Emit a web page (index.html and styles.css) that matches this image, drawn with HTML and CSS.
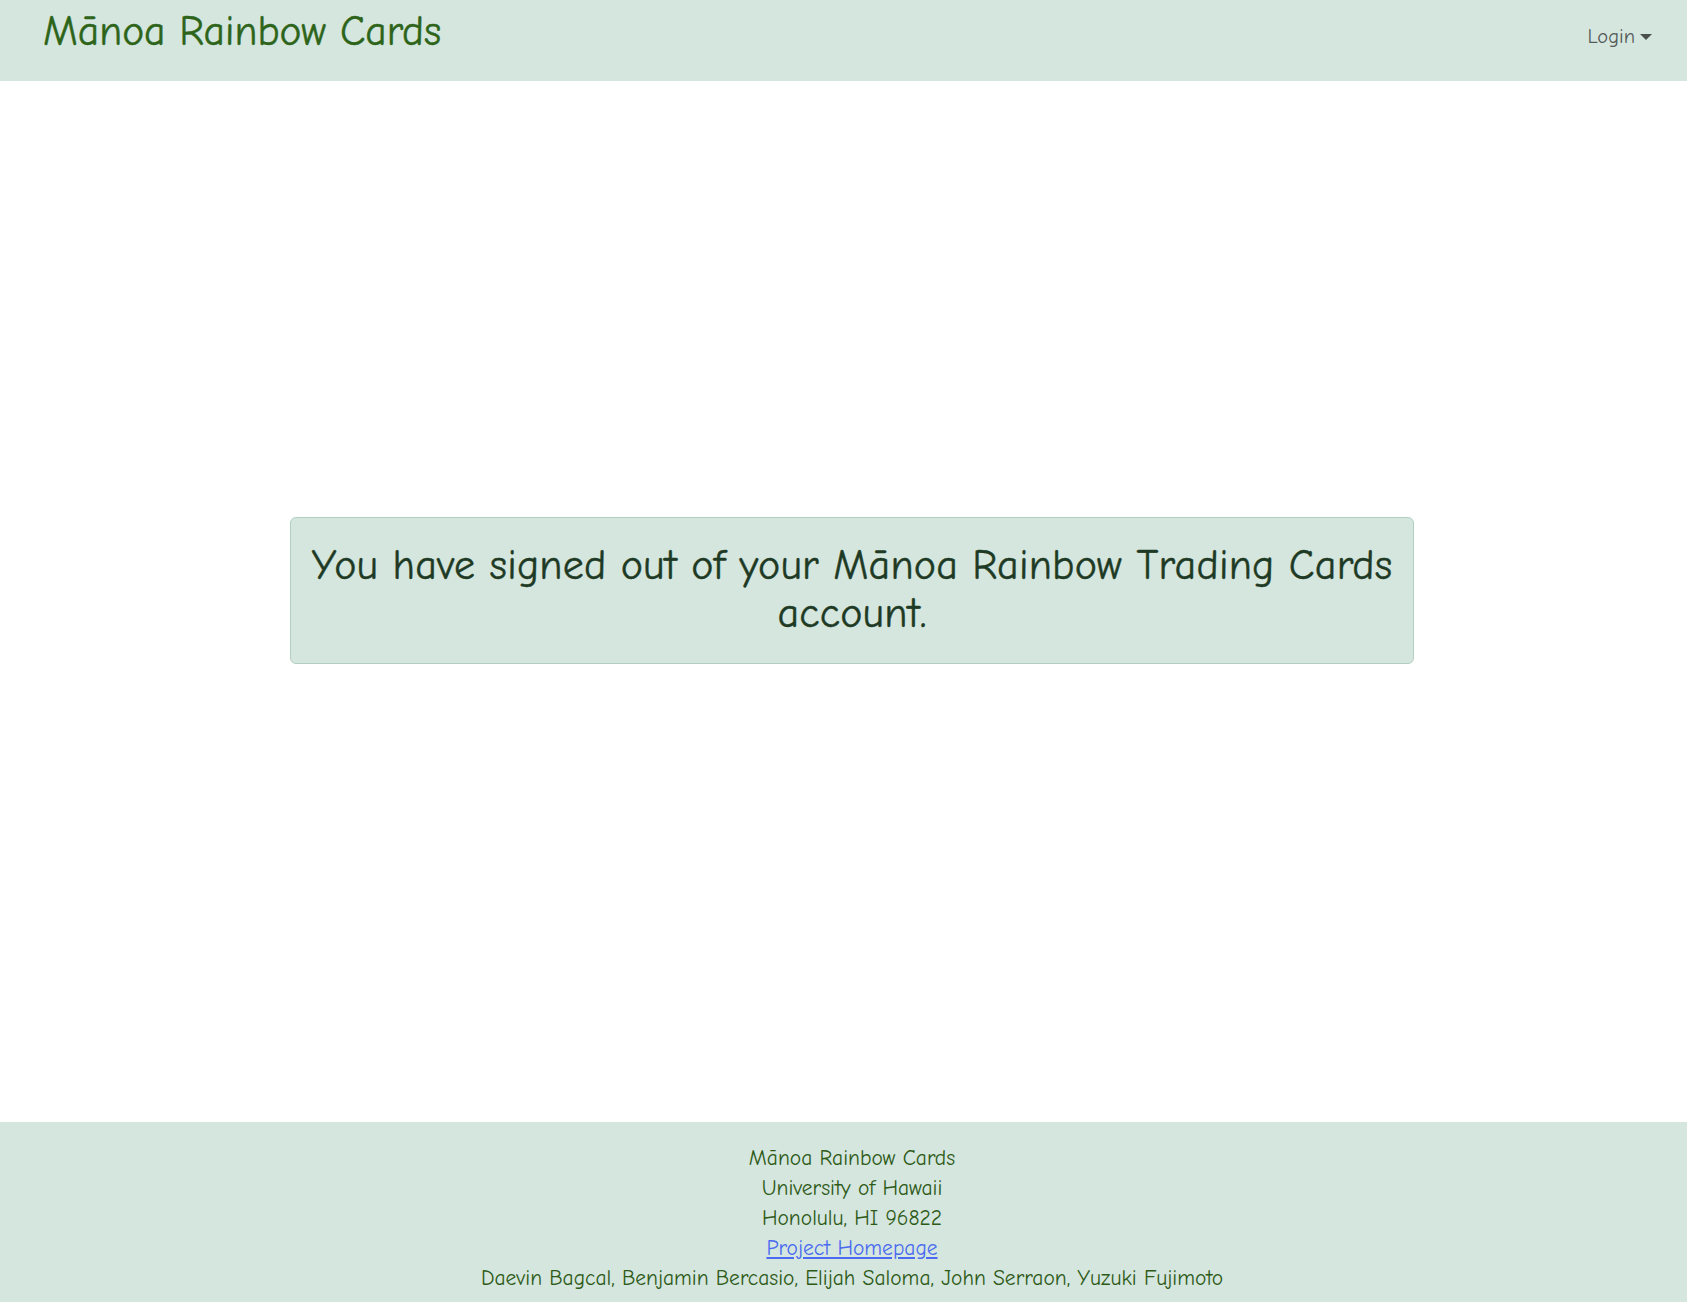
FILE: index.html
```html
<!DOCTYPE html>
<html lang="en">
<head>
<meta charset="utf-8">
<title>Mānoa Rainbow Cards</title>
<link rel="stylesheet" href="styles.css">
</head>
<body>
<nav class="navbar">
  <a class="brand" href="#">Mānoa Rainbow Cards</a>
  <a class="login" href="#">Login<span class="caret"></span></a>
</nav>
<main class="main">
  <div class="notice">
    <h1 class="notice-text">You have signed out of your Mānoa Rainbow Trading Cards account.</h1>
  </div>
</main>
<footer class="footer">
  <div>Mānoa Rainbow Cards</div>
  <div>University of Hawaii</div>
  <div>Honolulu, HI 96822</div>
  <div><a class="footer-link" href="#">Project Homepage</a></div>
  <div>Daevin Bagcal, Benjamin Bercasio, Elijah Saloma, John Serraon, Yuzuki Fujimoto</div>
</footer>
</body>
</html>
```
FILE: styles.css
```css
* { box-sizing: border-box; }
html, body { margin: 0; padding: 0; }
body {
  font-family: "Comic Sans MS", "Comic Neue", "Noto Sans", sans-serif;
  font-weight: 400;
  background: #ffffff;
  color: #212529;
  width: 1687px;
  overflow: hidden;
}
.navbar {
  height: 81px;
  background: #d4e6de;
  display: flex;
  align-items: flex-start;
  justify-content: space-between;
  padding: 4px 35px 0 43px;
}
.brand {
  font-size: 41.5px;
  line-height: 56px;
  color: #2d6419;
  text-decoration: none;
  -webkit-text-stroke: 0.4px #2d6419;
}
.login {
  margin-top: 18px;
  font-size: 20.5px;
  line-height: 30px;
  color: #555b58;
  text-decoration: none;
  display: flex;
  align-items: center;
}
.caret {
  display: inline-block;
  margin-left: 5px;
  width: 0;
  height: 0;
  border-top: 6px solid #4a504d;
  border-left: 6px solid transparent;
  border-right: 6px solid transparent;
}
.main {
  height: 1041px;
  padding: 436px 0 0 17px;
  display: flex;
  justify-content: center;
}
.notice {
  width: 1124px;
  height: 147px;
  background: #d4e6de;
  border: 1px solid #b2d0c2;
  border-radius: 6px;
  padding: 24px 10px;
}
.notice-text {
  margin: 0;
  font-size: 42px;
  font-weight: 400;
  letter-spacing: 0.2px;
  line-height: 48px;
  text-align: center;
  color: #1e3a24;
  -webkit-text-stroke: 0.4px #1e3a24;
}
.footer {
  background: #d4e6de;
  height: 180px;
  padding: 21px 0 0 17px;
  text-align: center;
  font-size: 21.5px;
  line-height: 30px;
  color: #2e5a17;
}
.footer-link { color: #4a6af0; }
```
